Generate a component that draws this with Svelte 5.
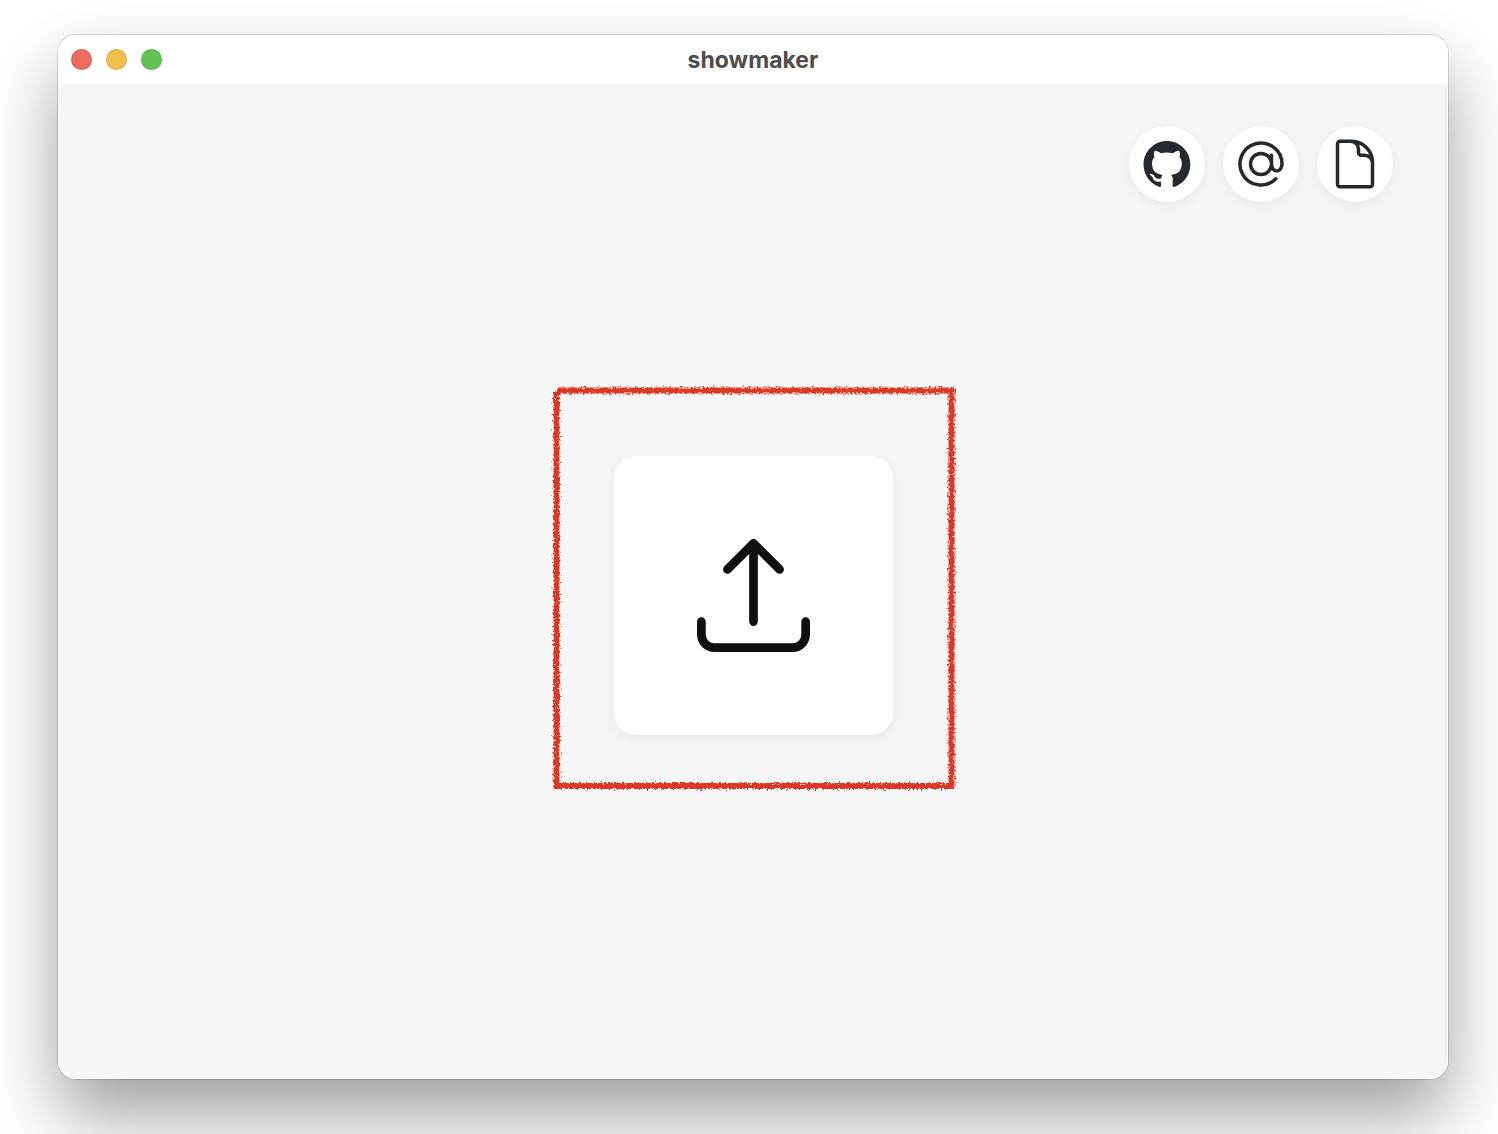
<script>
  const controls = [
    { name: 'Close', tone: 'close' },
    { name: 'Minimize', tone: 'minimize' },
    { name: 'Zoom', tone: 'zoom' }
  ];
</script>

<div class="desktop">
  <div class="window">
    <header class="titlebar">
      <div class="controls">
        {#each controls as control}
          <button type="button" class="light {control.tone}" aria-label={control.name}></button>
        {/each}
      </div>
      <h1>showmaker</h1>
    </header>

    <nav class="links" aria-label="Links">
      <a href="#github" aria-label="GitHub">
        <svg class="mark" viewBox="0 0 98 96" fill="currentColor">
          <path fill-rule="evenodd" clip-rule="evenodd" d="M48.854 0C21.839 0 0 22 0 49.217c0 21.756 13.993 40.172 33.405 46.69 2.427.49 3.316-1.059 3.316-2.362 0-1.141-.08-5.052-.08-9.127-13.59 2.934-16.42-5.867-16.42-5.867-2.184-5.704-5.42-7.17-5.42-7.17-4.448-3.015.324-3.015.324-3.015 4.934.326 7.523 5.052 7.523 5.052 4.367 7.496 11.404 5.378 14.235 4.074.404-3.178 1.699-5.378 3.074-6.6-10.839-1.141-22.243-5.378-22.243-24.283 0-5.378 1.94-9.778 5.014-13.2-.485-1.222-2.184-6.275.486-13.038 0 0 4.125-1.304 13.426 5.052a46.97 46.97 0 0 1 12.214-1.63c4.125 0 8.33.571 12.213 1.63 9.302-6.356 13.427-5.052 13.427-5.052 2.67 6.763.97 11.816.485 13.038 3.155 3.422 5.015 7.822 5.015 13.2 0 18.905-11.404 23.06-22.324 24.283 1.78 1.548 3.316 4.481 3.316 9.126 0 6.6-.08 11.897-.08 13.526 0 1.304.89 2.853 3.316 2.364 19.412-6.52 33.405-24.935 33.405-46.691C97.707 22 75.788 0 48.854 0z" />
        </svg>
      </a>
      <a href="#contact" aria-label="Contact">
        <svg class="line" viewBox="0 0 24 24">
          <path d="M16.5 12a4.5 4.5 0 1 1-9 0 4.5 4.5 0 0 1 9 0zm0 0c0 1.657 1.007 3 2.25 3S21 13.657 21 12a9 9 0 1 0-2.636 6.364M16.5 12V8.25" />
        </svg>
      </a>
      <a href="#document" aria-label="Document">
        <svg class="line" viewBox="0 0 24 24">
          <path d="M19.5 14.25v-2.625a3.375 3.375 0 0 0-3.375-3.375h-1.5A1.125 1.125 0 0 1 13.5 7.125v-1.5a3.375 3.375 0 0 0-3.375-3.375H8.25m2.25 0H5.625c-.621 0-1.125.504-1.125 1.125v17.25c0 .621.504 1.125 1.125 1.125h12.75c.621 0 1.125-.504 1.125-1.125V11.25a9 9 0 0 0-9-9z" />
        </svg>
      </a>
    </nav>

    <main>
      <div class="drop">
        <button type="button" class="upload" aria-label="Upload a file">
          <svg viewBox="0 0 24 24">
            <path d="M3 16.5v2.25A2.25 2.25 0 0 0 5.25 21h13.5A2.25 2.25 0 0 0 21 18.75V16.5m-13.5-9L12 3m0 0 4.5 4.5M12 3v13.5" />
          </svg>
        </button>
        <svg class="crayon" viewBox="0 0 410 410" aria-hidden="true">
          <filter id="rough" filterUnits="userSpaceOnUse" x="0" y="0" width="410" height="410">
            <feTurbulence type="fractalNoise" baseFrequency="0.5" numOctaves="2" seed="4" result="grain" />
            <feDisplacementMap in="SourceGraphic" in2="grain" scale="7" xChannelSelector="R" yChannelSelector="G" />
            <feGaussianBlur stdDeviation="0.3" />
          </filter>
          <path filter="url(#rough)" d="M9 6.500H402.500V402H7.500V8" />
        </svg>
      </div>
    </main>
  </div>
</div>

<style>
  :global(body) {
    margin: 0;
    background: #fff;
  }
  .desktop {
    box-sizing: border-box;
    display: flex;
    min-height: 100vh;
    padding: 35px 50px 55px 58px;
    overflow: hidden;
    font-family: Inter, "Liberation Sans", sans-serif;
  }
  .window {
    flex: 1;
    display: flex;
    flex-direction: column;
    border-radius: 18px;
    background: #f6f6f6;
    box-shadow:
      inset 0 0 0 1px #fcfcfc,
      0 0 0 1px rgba(0, 0, 0, 0.14),
      0 36px 70px rgba(0, 0, 0, 0.38);
  }
  .titlebar {
    display: grid;
    grid-template-columns: 1fr auto 1fr;
    align-items: center;
    height: 49px;
    padding: 0 13px;
    border-radius: 18px 18px 0 0;
    background: #fff;
  }
  .controls {
    display: flex;
    gap: 14px;
  }
  .light {
    width: 21px;
    height: 21px;
    padding: 0;
    border: 1px solid rgba(0, 0, 0, 0.1);
    border-radius: 50%;
  }
  .close {
    background: #ec6a5e;
  }
  .minimize {
    background: #f4bf4f;
  }
  .zoom {
    background: #61c554;
  }
  h1 {
    margin: 0;
    color: #4d4d4d;
    font-size: 23px;
    line-height: 28px;
    font-weight: 700;
  }
  .links {
    display: flex;
    justify-content: flex-end;
    gap: 18px;
    padding: 42px 55px 0;
  }
  .links a {
    display: grid;
    place-items: center;
    width: 76px;
    height: 76px;
    border-radius: 50%;
    background: #fff;
    color: #24292f;
    box-shadow: 0 4px 14px rgba(0, 0, 0, 0.06);
  }
  .mark {
    width: 48px;
    height: 46px;
  }
  .line {
    width: 56px;
    height: 56px;
  }
  .line,
  .upload svg {
    fill: none;
    stroke: currentColor;
    stroke-width: 1.5;
    stroke-linecap: round;
    stroke-linejoin: round;
  }
  main {
    flex: 1;
    display: grid;
    place-items: center;
    padding-bottom: 90px;
  }
  .drop {
    position: relative;
  }
  .upload {
    display: grid;
    place-items: center;
    width: 279px;
    height: 279px;
    padding: 0;
    border: 0;
    border-radius: 22px;
    background: #fff;
    color: #0f0f0f;
    box-shadow: 0 4px 14px rgba(0, 0, 0, 0.06);
  }
  .upload svg {
    width: 139px;
    height: 139px;
  }
  .crayon {
    position: absolute;
    top: -72px;
    left: -65px;
    width: 410px;
    height: 410px;
    fill: none;
    stroke: #dd3826;
    stroke-width: 6;
    pointer-events: none;
  }
</style>
